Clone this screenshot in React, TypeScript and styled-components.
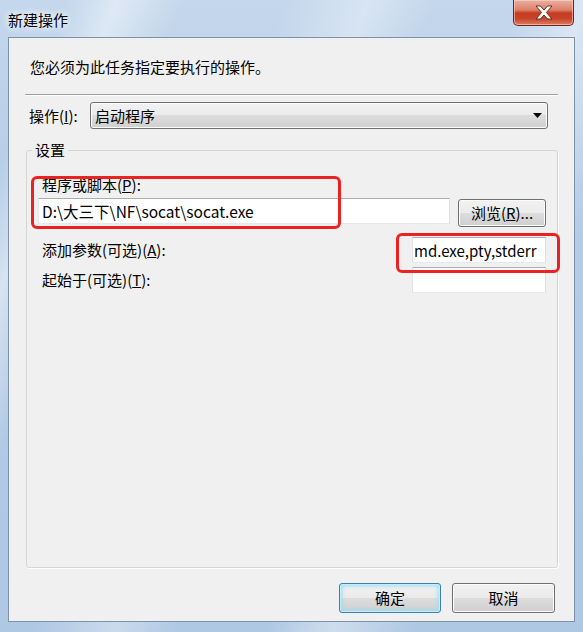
import styled, { createGlobalStyle } from 'styled-components';

const GlobalStyle = createGlobalStyle`
  html, body {
    margin: 0;
    padding: 0;
    background: #ffffff;
  }
  * {
    box-sizing: border-box;
  }
`;

const FONT = `"Noto Sans CJK SC", "Noto Sans", "Liberation Sans", sans-serif`;

const Window = styled.div`
  position: relative;
  width: 583px;
  height: 632px;
  display: flex;
  flex-direction: column;
  font-family: ${FONT};
  font-size: 15px;
  color: #000;
  background:
    linear-gradient(112deg, rgba(255, 255, 255, 0) 8%, rgba(255, 255, 255, 0.45) 14%, rgba(255, 255, 255, 0) 22%,
      rgba(255, 255, 255, 0) 34%, rgba(255, 255, 255, 0.35) 44%, rgba(255, 255, 255, 0) 52%,
      rgba(255, 255, 255, 0) 62%, rgba(255, 255, 255, 0.4) 70%, rgba(255, 255, 255, 0) 80%),
    linear-gradient(180deg, #c4d7ec 0%, #b6cde7 30%, #aec7e3 100%);
`;

const TitleBar = styled.div`
  height: 37px;
  flex: none;
  display: flex;
  align-items: flex-start;
  justify-content: space-between;
  padding-left: 8px;
  padding-right: 9px;
`;

const Title = styled.div`
  margin-top: 10px;
  line-height: 20px;
  text-shadow: 0 0 6px #ffffff, 0 0 10px #ffffff;
`;

const CloseButton = styled.div`
  width: 61px;
  height: 26px;
  display: flex;
  align-items: center;
  justify-content: center;
  border: 1px solid #6b2519;
  border-top: none;
  border-radius: 0 0 5px 5px;
  background: linear-gradient(180deg, #eab0a2 0%, #dc8068 40%, #c63b20 52%, #c8442a 75%, #de7e64 100%);
  box-shadow: inset 0 0 0 1px rgba(255, 220, 210, 0.55);
`;

const Client = styled.div`
  flex: 1;
  margin: 0 8px 10px 8px;
  border: 1px solid #7d91ab;
  background: #f0f0f0;
  display: flex;
  flex-direction: column;
  padding: 19px 0 8px 0;
`;

const Header = styled.div`
  line-height: 20px;
  padding-left: 21px;
`;

const Separator = styled.div`
  margin: 17px 16px 0 16px;
  border-top: 1px solid #a0a0a0;
  border-bottom: 1px solid #ffffff;
`;

const ActionRow = styled.div`
  display: flex;
  align-items: center;
  margin: 6px 26px 0 20px;
`;

const ActionLabel = styled.div`
  width: 61px;
  line-height: 20px;
  flex: none;
`;

const Combo = styled.div`
  flex: 1;
  height: 27px;
  display: flex;
  align-items: center;
  justify-content: space-between;
  padding: 0 5px 0 4px;
  border: 1px solid #707070;
  border-radius: 3px;
  background: linear-gradient(180deg, #f2f2f2 0%, #ebebeb 50%, #dddddd 50%, #cfcfcf 100%);
  box-shadow: inset 0 0 0 1px #fcfcfc;
  line-height: 20px;
`;

const Group = styled.fieldset`
  flex: 1;
  min-width: 0;
  margin: 11px 16px 0 17px;
  padding: 0 11px 0 11px;
  border: 1px solid #d5d5d5;
  border-radius: 3px;
  box-shadow: 1px 1px 0 #ffffff;
`;

const Legend = styled.legend`
  margin-left: -6px;
  padding: 0 3px;
  line-height: 20px;
`;

const FieldLabel = styled.div<{ $top?: number }>`
  line-height: 20px;
  margin-left: 4px;
  margin-top: ${(p) => p.$top ?? 0}px;
`;

const PathRow = styled.div`
  display: flex;
  align-items: flex-start;
  gap: 8px;
  margin-top: 3px;
`;

const TextBox = styled.input<{ $width?: number; $size?: number }>`
  height: 26px;
  ${(p) => (p.$width ? `width: ${p.$width}px; flex: none;` : 'flex: 1; min-width: 0;')}
  margin: 0;
  padding: 0 3px;
  border: 1px solid;
  border-color: #abadb3 #dbdfe6 #e3e9ef #e2e3ea;
  background: #ffffff;
  font-family: ${FONT};
  font-size: ${(p) => p.$size ?? 15}px;
  color: #000;
  outline: none;
`;

const ScrolledBox = styled(TextBox)`
  padding-left: 1px;
`;

const OptionRow = styled.div<{ $gap: number }>`
  display: flex;
  align-items: center;
  justify-content: space-between;
  margin-top: ${(p) => p.$gap}px;
`;

const Button = styled.div<{ $default?: boolean; $width: number; $height: number }>`
  width: ${(p) => p.$width}px;
  height: ${(p) => p.$height}px;
  flex: none;
  display: flex;
  align-items: center;
  justify-content: center;
  border: 1px solid ${(p) => (p.$default ? '#3c7fb1' : '#707070')};
  border-radius: 3px;
  background: linear-gradient(180deg, #f2f2f2 0%, #ebebeb 50%, #dddddd 50%, #cfcfcf 100%);
  box-shadow: ${(p) =>
    p.$default ? 'inset 0 0 0 1px #bfeefd, inset 0 0 4px 2px #9fdcf5' : 'inset 0 0 0 1px #fcfcfc'};
  line-height: 20px;
`;

const BrowseButton = styled(Button)`
  margin-top: 1px;
`;

const Footer = styled.div`
  display: flex;
  justify-content: flex-end;
  gap: 11px;
  margin: 15px 19px 0 0;
`;

const Callout = styled.div<{ $left: number; $top: number; $w: number; $h: number }>`
  position: absolute;
  left: ${(p) => p.$left}px;
  top: ${(p) => p.$top}px;
  width: ${(p) => p.$w}px;
  height: ${(p) => p.$h}px;
  border: 3px solid #ec2222;
  border-radius: 6px;
  pointer-events: none;
`;

const CloseGlyph = () => (
  <svg width="20" height="15" viewBox="0 0 20 15">
    <path
      d="M2 1 H6.5 L10 5 L13.5 1 H18 L12.4 7.5 L18 14 H13.5 L10 10 L6.5 14 H2 L7.6 7.5 Z"
      fill="#ffffff"
      stroke="#5a2016"
      strokeWidth="0.9"
      strokeLinejoin="round"
    />
  </svg>
);

const DropArrow = () => (
  <svg width="9" height="5" viewBox="0 0 9 5">
    <path d="M0 0 H9 L4.5 5 Z" fill="#000" />
  </svg>
);

export default function App() {
  return (
    <>
      <GlobalStyle />
      <Window>
        <TitleBar>
          <Title>新建操作</Title>
          <CloseButton>
            <CloseGlyph />
          </CloseButton>
        </TitleBar>
        <Client>
          <Header>您必须为此任务指定要执行的操作。</Header>
          <Separator />
          <ActionRow>
            <ActionLabel>
              操作(<u>I</u>):
            </ActionLabel>
            <Combo>
              <span>启动程序</span>
              <DropArrow />
            </Combo>
          </ActionRow>
          <Group>
            <Legend>设置</Legend>
            <FieldLabel $top={15}>
              程序或脚本(<u>P</u>):
            </FieldLabel>
            <PathRow>
              <TextBox $size={15.5} readOnly defaultValue={'D:\\大三下\\NF\\socat\\socat.exe'} />
              <BrowseButton $width={88} $height={28}>
                浏览(<u>R</u>)...
              </BrowseButton>
            </PathRow>
            <OptionRow $gap={10}>
              <FieldLabel>
                添加参数(可选)(<u>A</u>):
              </FieldLabel>
              <ScrolledBox $width={134} readOnly defaultValue="md.exe,pty,stderr" />
            </OptionRow>
            <OptionRow $gap={4}>
              <FieldLabel>
                起始于(可选)(<u>T</u>):
              </FieldLabel>
              <TextBox $width={134} readOnly defaultValue="" />
            </OptionRow>
          </Group>
          <Footer>
            <Button $default $width={102} $height={30}>
              确定
            </Button>
            <Button $width={103} $height={30}>
              取消
            </Button>
          </Footer>
        </Client>
        <Callout $left={31} $top={176} $w={310} $h={53} />
        <Callout $left={396} $top={233} $w={164} $h={40} />
      </Window>
    </>
  );
}
